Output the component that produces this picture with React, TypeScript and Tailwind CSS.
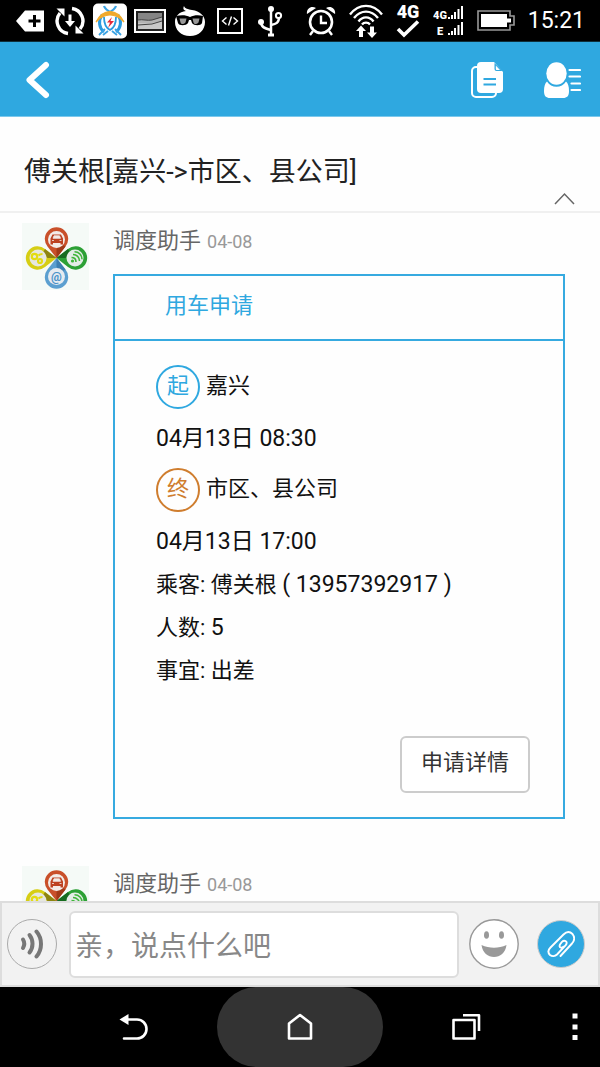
import type { ReactNode } from "react";

const stops = [
  { mark: "起", place: "嘉兴", time: "04月13日 08:30", tone: "border-[#2fa8e0] text-[#2fa8e0]" },
  { mark: "终", place: "市区、县公司", time: "04月13日 17:00", tone: "border-[#cf7d2e] text-[#cf7d2e]" },
];

function Slot({ children }: { children: ReactNode }) {
  return <span className="flex w-10 shrink-0 items-center justify-center">{children}</span>;
}

function StatusBar() {
  return (
    <div className="flex h-[42px] shrink-0 items-center border-b border-[#0f2f3b] bg-black pl-[10px] pr-[15px] text-white">
      <Slot>
        <svg width="30" height="24" viewBox="0 0 30 24">
          <path d="M1 12 10 1.500H29V22.500H10Z" fill="#fff" />
          <path d="M19.500 6v12M13.500 12h12" stroke="#000" strokeWidth="3" />
        </svg>
      </Slot>
      <Slot>
        <svg width="30" height="30" viewBox="0 0 30 30" fill="none" stroke="#fff" strokeWidth="3.400">
          <path d="M13 27.500A12.600 12.600 0 0 1 5 7" />
          <path d="M17 2.500A12.600 12.600 0 0 1 25 23" />
          <path d="M1.500 2.500H9.500V10.500Z" fill="#fff" stroke="none" />
          <path d="M28.500 27.500H20.500V19.500Z" fill="#fff" stroke="none" />
          <path d="M15 8.500v8" strokeWidth="3" />
          <path d="M10 15h10L15 21Z" fill="#fff" stroke="none" />
        </svg>
      </Slot>
      <Slot>
        <svg width="34" height="36" viewBox="0 0 34 36" fill="none">
          <rect x="0" y="0.500" width="34" height="35" rx="5" fill="#fff" />
          <path d="M11 3c1 3 4 5 8 7M23 3c-1 3-4 5-8 7" stroke="#3ba3e3" strokeWidth="2.200" />
          <path d="M9 12C5 18 6 25 11 29M25 12c4 6 3 13-2 17" stroke="#2b9be0" strokeWidth="3" />
          <path d="M11 14c0 7 2 11 6 13 4-2 6-6 6-13" stroke="#2b9be0" strokeWidth="1.800" />
          <path d="m12 26-6 6M22 26l6 6M15 28l-5 4M19 28l5 4" stroke="#3ba3e3" strokeWidth="1.800" />
          <path d="M3 19C6 13 11 8.500 17 8.500S28 13 31 19C27 14.500 22 12 17 12S7 14.500 3 19Z" fill="#f0a92c" stroke="#f0a92c" strokeWidth="1.200" />
          <path d="m19 14-5 5.500h3L15 25l6-7h-3.500Z" fill="#e5283a" />
        </svg>
      </Slot>
      <Slot>
        <svg width="32" height="24" viewBox="0 0 32 24">
          <rect x="1" y="1" width="30" height="22" fill="#222" stroke="#fff" strokeWidth="2" />
          <rect x="4" y="4" width="24" height="16" fill="#858585" />
          <path d="M4 11c5-1 9 1 14 0l10-3v12H4Z" fill="#b4b4b4" />
          <path d="M4 14c8 0 12 1 24-2v8H4Z" fill="#c8c8c8" />
          <path d="M4 11c5-1 9 1 14 0l10-3M4 16l14-1 10-3" fill="none" stroke="#444" strokeWidth="1" />
        </svg>
      </Slot>
      <Slot>
        <svg width="32" height="32" viewBox="0 0 32 32">
          <path d="M10 1c1 3 4 3 8 4 8 1 13 6 13 12 0 8-6 14-15 14S1 25 1 17C1 11 5 7 12 6 9 5 9 3 10 1Z" fill="#fff" />
          <path d="M2 11c5-1 10-1 14 1 4-2 9-2 13-1l-1 7c-1 3-8 3-10 0l-1-3h-2l-1 3c-2 3-9 3-10 0Z" fill="#000" />
          <path d="M5.500 13.500h7l-1 4c-2 2-4 2-5 0ZM18.500 13.500h7l-1 4c-2 2-4 2-5 0Z" fill="#999" />
        </svg>
      </Slot>
      <Slot>
        <svg width="26" height="26" viewBox="0 0 26 26" fill="none" stroke="#fff">
          <rect x="1" y="1" width="24" height="24" strokeWidth="2" />
          <path d="m9.500 9.500-4 3.500 4 3.500M16.500 9.500l4 3.500-4 3.500M14.500 8.500l-3 9" strokeWidth="1.400" />
        </svg>
      </Slot>
      <Slot>
        <svg width="26" height="32" viewBox="0 0 26 32" fill="none" stroke="#fff" strokeWidth="2">
          <circle cx="14" cy="4" r="3" fill="#fff" stroke="none" />
          <path d="M14 4v25" strokeWidth="2.500" />
          <path d="M11 30h6" strokeWidth="3" />
          <path d="M4 17c0 5 3 6 10 8M22 12c0 6-3 7-8 8" strokeWidth="2.500" />
          <circle cx="4" cy="17" r="3" fill="#fff" stroke="none" />
          <circle cx="21.500" cy="10.500" r="2.600" />
        </svg>
      </Slot>

      <div className="ml-auto flex items-center gap-[13px]">
        <svg width="30" height="30" viewBox="0 0 30 30" fill="none" stroke="#fff" strokeWidth="2.600">
          <circle cx="15" cy="16" r="11" />
          <path d="M15 9.500V17h6M7 25l-3 4M23 25l3 4" strokeWidth="2.400" />
          <path d="M1 8C0 3 5-1 10 2Z" fill="#fff" stroke="none" />
          <path d="M29 8c1-5-4-9-9-6Z" fill="#fff" stroke="none" />
        </svg>
        <svg width="34" height="34" viewBox="0 0 34 34" fill="none" stroke="#fff" strokeWidth="2.400">
          <path d="M1 10.500C10-1 24-1 33 10.500M5 14c7-8.500 17-8.500 24 0M9.500 17.500c4-5.500 11-5.500 15 0M13 20.500c2-2.500 6-2.500 8 0" />
          <path d="M12 21.500 7 27h3v6h4v-6h3ZM23 34l5-5.500h-3v-6h-4v6h-3Z" fill="#fff" stroke="none" />
        </svg>
        <svg width="24" height="36" viewBox="0 0 24 36">
          <text x="12" y="15" textAnchor="middle" fontFamily="Roboto, sans-serif" fontWeight="900" fontSize="18" fill="#fff">4G</text>
          <path d="m2 26 6 6L22 18.500" fill="none" stroke="#fff" strokeWidth="3.600" />
        </svg>
        <svg width="31" height="32" viewBox="0 0 31 32" fill="#fff">
          <text x="0" y="14" fontFamily="Roboto, sans-serif" fontWeight="900" fontSize="11">4G</text>
          <text x="4" y="30" fontFamily="Roboto, sans-serif" fontWeight="900" fontSize="11">E</text>
          <path d="M15 12h2v2h-2zM18 10h2v4h-2zM21 7h2v7h-2zM24.500 4h2v10h-2zM28 1h2v13h-2z" />
          <path d="M15 28h2v2h-2zM18 26h2v4h-2zM21 23h2v7h-2zM24.500 20h2v10h-2zM28 17h2v13h-2z" />
        </svg>
        <svg width="38" height="21" viewBox="0 0 38 21">
          <path d="M1 1h32v5h4v9h-4v5H1Z" fill="none" stroke="#999" strokeWidth="1.600" />
          <path d="M4 4h26v4.500h4v4h-4V17H4Z" fill="#fff" />
        </svg>
        <span className="text-[23px] leading-7">15:21</span>
      </div>
    </div>
  );
}

function AppHeader() {
  return (
    <header className="flex h-[75px] shrink-0 items-center border-b border-[#7cc8ec] bg-[#2fa8e0] px-[19px] pt-[2px]">
      <button type="button" aria-label="返回" className="px-[7px]">
        <svg width="24" height="38" viewBox="0 0 24 38" fill="none" stroke="#fff" strokeWidth="6" strokeLinecap="round" strokeLinejoin="round">
          <path d="M20 4 3.500 19 20 34" />
        </svg>
      </button>
      <div className="ml-auto flex items-center gap-10">
        <button type="button" aria-label="记录">
          <svg width="33" height="38" viewBox="0 0 33 38">
            <path d="M6 6H5a4 4 0 0 0-4 4v22a4 4 0 0 0 4 4h16a4 4 0 0 0 4-4" fill="none" stroke="#fff" strokeWidth="2" />
            <path d="M10 1h13l9 10v17a4 4 0 0 1-4 4H10a4 4 0 0 1-4-4V5a4 4 0 0 1 4-4Z" fill="#fff" />
            <path d="M23.500 2V8a2 2 0 0 0 2 2h6Z" fill="#2fa8e0" />
            <path d="M24.800 4.500V8c0 .6.300.9.900.9h3.300Z" fill="#fff" />
            <path d="M12.500 18H25M12.500 23.500H25" stroke="#2fa8e0" strokeWidth="2.200" />
          </svg>
        </button>
        <button type="button" aria-label="成员">
          <svg width="37" height="38" viewBox="0 0 37 38" fill="#fff">
            <ellipse cx="12.500" cy="12.500" rx="10.200" ry="11.200" />
            <path d="M3 20.500c4 7 15 7 19 0 2 1.500 3 5 3 9.500 0 5-2 7-6 7H6c-4 0-6-2-6-7 0-4.500 1-8 3-9.500Z" />
            <path d="M25.500 9H36M25.500 15.500H36M27.500 22.500H36M27.500 29H36" stroke="#fff" strokeWidth="2.200" strokeLinecap="round" />
          </svg>
        </button>
      </div>
    </header>
  );
}

function Avatar() {
  const pin = "M0 0-9-11.500a11.700 11.700 0 1 1 18 0Z";
  const shade = "M0 0-9-11.500-5-14 0-9Z";
  return (
    <svg className="h-[67px] w-[67px] shrink-0" viewBox="0 0 67 67" role="img" aria-label="调度助手">
      <rect width="67" height="67" fill="#f5faf7" />
      <g transform="translate(34.500 35)">
        <g transform="rotate(-90)">
          <path d={pin} fill="#d6ce14" />
          <path d={shade} fill="#8d8410" transform="scale(-1 1)" />
        </g>
        <g transform="rotate(90)">
          <path d={pin} fill="#2ca035" />
          <path d={shade} fill="#176b20" />
        </g>
        <g transform="rotate(180)">
          <path d={pin} fill="#5b9fd0" />
          <path d={shade} fill="#3d7fb0" />
        </g>
        <path d={pin} fill="#c9502a" />
        <path d={shade} fill="#a13a18" transform="scale(-1 1)" />
        <circle cy="-18.500" r="8.500" fill="#f3ece8" />
        <circle cx="-18.500" r="8.500" fill="#e6e7e0" />
        <circle cx="18.500" r="8.500" fill="#e4ece7" />
        <circle cy="18.500" r="8.500" fill="#e6ebf0" />
      </g>
      <path d="m30.500 11.500-2 4v6h2.500V20h7.500v1.500H41v-6l-2-4Z" fill="#bd4221" />
      <path d="M32 12.800h5.500l1 2.500h-7.500ZM30 17.500h2M37.500 17.500h2" fill="#f3ece8" stroke="#f3ece8" strokeWidth=".8" />
      <g fill="none" stroke="#e3dc12" strokeWidth="2.200">
        <circle cx="12.500" cy="33.500" r="2.700" />
        <circle cx="18" cy="38" r="2" />
        <path d="M16.500 32.500c1-1 2-1.500 4-1.500" />
      </g>
      <g fill="none" stroke="#3fb53a" strokeWidth="1.600">
        <circle cx="50.500" cy="38" r="1.600" fill="#3fb53a" stroke="none" />
        <path d="M49.500 34.500c3 0 4.500 2 4.500 4.500M51 31.500c4 0 6.500 3 6.500 6.500M52.500 28.800c4.500 0 7.500 3.500 7.500 7.500" />
      </g>
      <text x="34.500" y="57.500" textAnchor="middle" fontFamily="Roboto, sans-serif" fontWeight="700" fontSize="12" fill="#4a92c9">@</text>
    </svg>
  );
}

function Sender({ name, date }: { name: string; date: string }) {
  return (
    <p className="flex items-baseline gap-[6px] text-[22px] leading-9 text-[#666]">
      {name}
      <time className="text-[18px] text-[#999]">{date}</time>
    </p>
  );
}

function RequestCard() {
  return (
    <article className="mt-[14px] border-2 border-[#36aae0] text-[22px] text-[#111]">
      <h2 className="border-b-2 border-[#36aae0] pb-1 pl-[50px] leading-[59px] text-[#2fa8e0]">用车申请</h2>
      <div className="pb-6 pl-[41px] pr-[33px] pt-6">
        <div className="flex flex-col gap-2">
          {stops.map((s) => (
            <div key={s.mark}>
              <div className="mb-2 flex h-11 items-center gap-[6px]">
                <span className={`flex size-11 items-center justify-center rounded-full border-2 pb-1 ${s.tone}`}>
                  {s.mark}
                </span>
                <span className="pb-1">{s.place}</span>
              </div>
              <p className="text-[23px] leading-[43px]">{s.time}</p>
            </div>
          ))}
        </div>
        <p className="leading-[43px]">
          乘客: 傅关根 <span className="text-[23px]">( 13957392917 )</span>
        </p>
        <p className="leading-[43px]">
          人数: <span className="text-[23px]">5</span>
        </p>
        <p className="leading-[43px]">事宜: 出差</p>
        <div className="mt-11 flex justify-end">
          <button type="button" className="h-[57px] rounded-md border-2 border-[#ccc] bg-white px-[19px] pb-1 text-[#333]">
            申请详情
          </button>
        </div>
      </div>
    </article>
  );
}

function Composer() {
  return (
    <form className="flex h-[86px] shrink-0 items-center border-2 border-[#ddd] bg-[#f2f2f2] pl-[5px] pr-[13px]">
      <button type="button" aria-label="语音" className="flex size-[50px] shrink-0 items-center justify-center rounded-full border border-[#aaa]">
        <svg width="24" height="30" viewBox="0 0 24 30" fill="none" stroke="#777" strokeWidth="4" strokeLinecap="round">
          <path d="M3 10.500c1.500 2.500 1.500 6 0 8.500" />
          <path d="M9.500 6c4 5 4 12.500 0 17.500" />
          <path d="M16.500 2.500c6 7 6 18 0 25" />
        </svg>
      </button>
      <input
        type="text"
        aria-label="消息"
        placeholder="亲，说点什么吧"
        className="ml-3 mr-[10px] h-[67px] min-w-0 flex-1 rounded-md border-2 border-[#ddd] bg-white px-1 pt-1 text-[28px] placeholder:text-[#888]"
      />
      <button type="button" aria-label="表情" className="shrink-0">
        <svg width="50" height="50" viewBox="0 0 50 50">
          <circle cx="25" cy="25" r="24.200" fill="#fff" stroke="#999" strokeWidth="1.400" />
          <ellipse cx="17.500" cy="16" rx="2.500" ry="3.800" fill="#999" />
          <ellipse cx="32.500" cy="16" rx="2.500" ry="3.800" fill="#999" />
          <path d="M12.500 26c8 3.500 17 3.500 25 0-1 8-6.500 12-12.500 12s-11.500-4-12.500-12Z" fill="#999" />
        </svg>
      </button>
      <button type="button" aria-label="附件" className="ml-[18px] flex size-[48px] shrink-0 items-center justify-center rounded-full border border-[#ccc] bg-[#2fa8e0]">
        <svg width="28" height="28" viewBox="0 0 28 28" fill="none" stroke="#fff" strokeWidth="1.900" strokeLinecap="round">
          <path d="m13.500 26 11.500-12.500c3-3.500 2.500-7 .5-9.500-2.500-2.500-6-2.500-9 .5L3.500 17.500C1 20 1 23 3 25c2 1.500 5 1.500 7-.5l8.500-9c1.500-2 1.500-3.500.3-4.300-1.200-.8-2.800-.4-3.800.6l-2 2.700c-.8 1.500-.3 2.600.5 3 1 .5 2 .2 3-.8" />
        </svg>
      </button>
    </form>
  );
}

function NavBar() {
  return (
    <nav className="flex h-20 shrink-0 bg-black pl-[51px] text-white">
      <button type="button" aria-label="后退" className="flex flex-1 items-center justify-center">
        <svg width="30" height="30" viewBox="0 0 30 30" fill="none" stroke="#fff" strokeWidth="2.600" strokeLinecap="round">
          <path d="M9 7.500h9a9.500 9.500 0 0 1 0 19H5" />
          <path d="M.5 7.500 9.500 2v11Z" fill="#fff" stroke="none" />
        </svg>
      </button>
      <button type="button" aria-label="主页" className="flex flex-1 items-center justify-center rounded-[40px] bg-[#333]">
        <svg width="26" height="28" viewBox="0 0 26 28" fill="none" stroke="#fff" strokeWidth="2.600" strokeLinejoin="round">
          <path d="M2 10.500 13 2l11 8.500V25.500H2Z" />
        </svg>
      </button>
      <button type="button" aria-label="最近任务" className="flex flex-1 items-center justify-center">
        <svg width="30" height="28" viewBox="0 0 30 28" fill="none" stroke="#fff" strokeWidth="2.600">
          <path d="M2.500 7h21v18.500h-21ZM12 2.300h16V18" strokeLinejoin="round" />
        </svg>
      </button>
      <button type="button" aria-label="更多" className="flex w-[51px] items-center justify-center">
        <svg width="6" height="28" viewBox="0 0 6 28" fill="#fff">
          <path d="M.5.500h5v5h-5zM.5 11.500h5v5h-5zM.5 22h5v5h-5z" />
        </svg>
      </button>
    </nav>
  );
}

export default function App() {
  return (
    <div className="flex h-screen flex-col overflow-hidden bg-[#fefefe] font-['Roboto','Noto_Sans_CJK_SC',sans-serif]">
      <StatusBar />
      <AppHeader />
      <div className="flex shrink-0 border-b-2 border-[#f0f0f0] pl-6 pr-[25px]">
        <h1 className="flex-1 pb-[21px] pt-[37px] text-[27px] leading-9 text-[#222]">傅关根[嘉兴-&gt;市区、县公司]</h1>
        <button type="button" aria-label="收起" className="mb-[6px] self-end">
          <svg width="21" height="13" viewBox="0 0 21 13" fill="none" stroke="#666" strokeWidth="1.500">
            <path d="m1 12 9.500-10L20 12" />
          </svg>
        </button>
      </div>
      <main className="min-h-0 flex-1 overflow-hidden pl-[22px] pr-[35px] pt-[10px]">
        <section className="flex gap-6">
          <Avatar />
          <div className="min-w-0 flex-1">
            <Sender name="调度助手" date="04-08" />
            <RequestCard />
          </div>
        </section>
        <section className="mt-[47px] flex gap-6">
          <Avatar />
          <Sender name="调度助手" date="04-08" />
        </section>
      </main>
      <Composer />
      <NavBar />
    </div>
  );
}
